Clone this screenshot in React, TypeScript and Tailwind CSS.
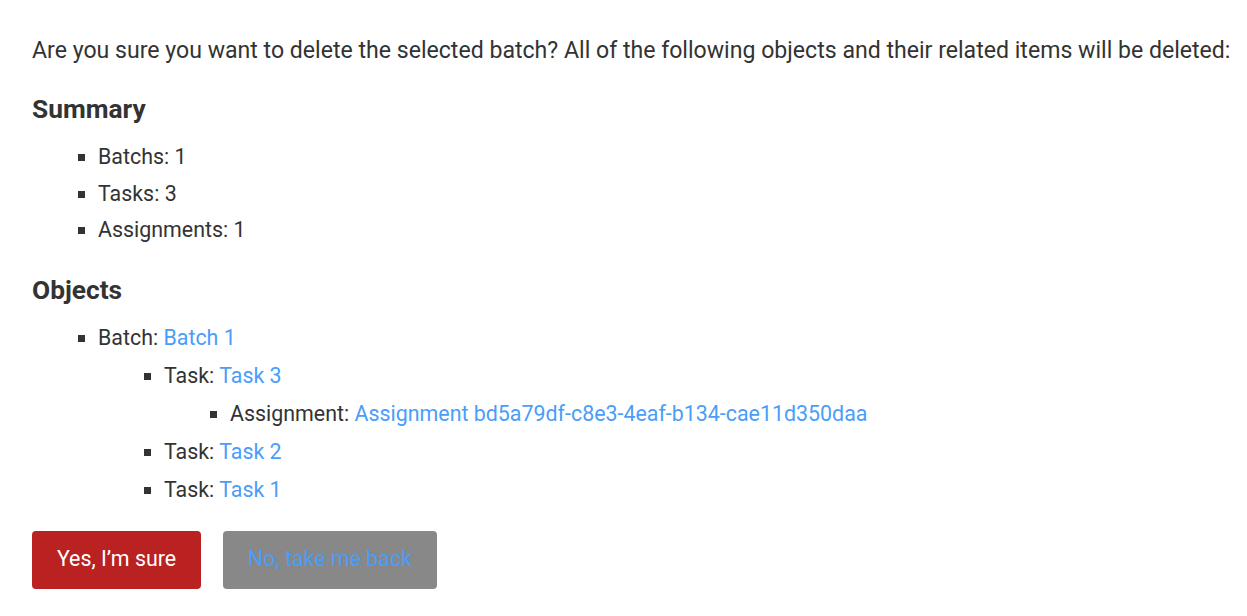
import React from "react";

const linkClass = "text-[#4a9df8] hover:underline";

export default function App() {
  return (
    <div className="min-h-screen bg-white pl-8 pr-[10px] pt-[36px] font-['Roboto',sans-serif] text-[21.4px] text-[#333333]">
      <p className="whitespace-nowrap text-[23.1px] leading-[30px]">
        Are you sure you want to delete the selected batch? All of the following objects and their related items will be deleted:
      </p>

      <h2 className="mt-[28px] text-[26.3px] font-bold leading-[30px]">Summary</h2>
      <ul className="mt-[15px] list-[square] pl-[66px] leading-[36.5px]">
        <li>Batchs: 1</li>
        <li>Tasks: 3</li>
        <li>Assignments: 1</li>
      </ul>

      <h2 className="mt-[26px] text-[26.3px] font-bold leading-[30px]">Objects</h2>
      <ul className="mt-[14px] list-[square] pl-[66px] leading-[38px]">
        <li>
          Batch: <a href="#" className={linkClass}>Batch 1</a>
          <ul className="list-[square] pl-[66px]">
            <li>
              Task: <a href="#" className={linkClass}>Task 3</a>
              <ul className="list-[square] pl-[66px]">
                <li>
                  Assignment: <a href="#" className={linkClass}>Assignment bd5a79df-c8e3-4eaf-b134-cae11d350daa</a>
                </li>
              </ul>
            </li>
            <li>
              Task: <a href="#" className={linkClass}>Task 2</a>
            </li>
            <li>
              Task: <a href="#" className={linkClass}>Task 1</a>
            </li>
          </ul>
        </li>
      </ul>

      <div className="mt-[22px] flex items-center gap-[22px]">
        <button className="h-[58px] w-[169px] rounded-[4px] bg-[#ba2121] text-[21.4px] text-white">
          Yes, I’m sure
        </button>
        <button className="h-[58px] w-[214px] rounded-[4px] bg-[#888888] text-[21.4px] text-[#4a9df8]">
          No, take me back
        </button>
      </div>
    </div>
  );
}
